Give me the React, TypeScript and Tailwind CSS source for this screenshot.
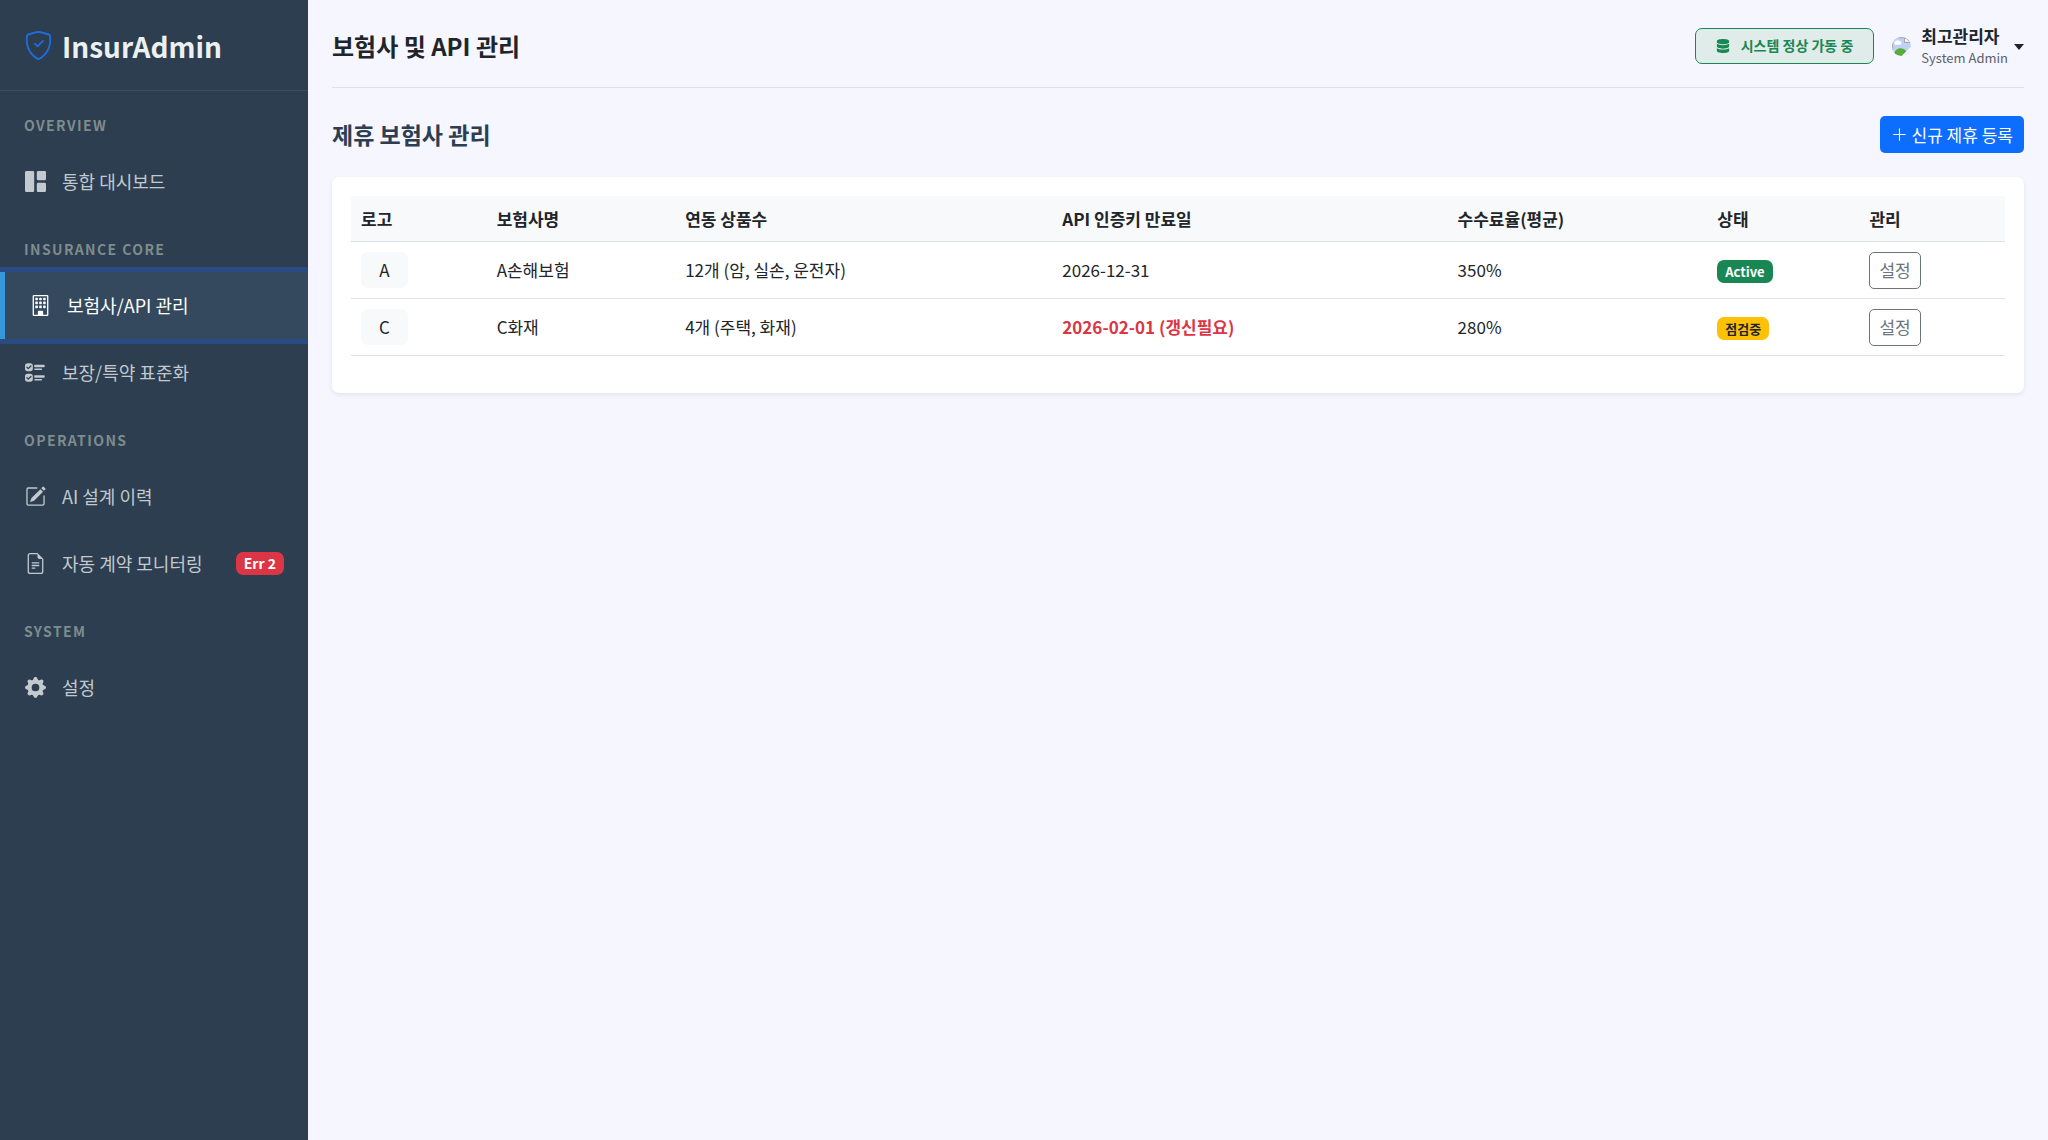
import type { ReactNode } from "react";
import {
  BsShieldCheck,
  BsGrid1X2Fill,
  BsBuilding,
  BsUiChecks,
  BsPencilSquare,
  BsFileEarmarkText,
  BsGearFill,
  BsPlusLg,
} from "react-icons/bs";
import { FaDatabase } from "react-icons/fa";

type Item = { label: string; icon: ReactNode; active?: boolean; badge?: string };
type Section = { title: string; items: Item[] };

const sections: Section[] = [
  { title: "OVERVIEW", items: [{ label: "통합 대시보드", icon: <BsGrid1X2Fill /> }] },
  {
    title: "INSURANCE CORE",
    items: [
      { label: "보험사/API 관리", icon: <BsBuilding />, active: true },
      { label: "보장/특약 표준화", icon: <BsUiChecks /> },
    ],
  },
  {
    title: "OPERATIONS",
    items: [
      { label: "AI 설계 이력", icon: <BsPencilSquare /> },
      { label: "자동 계약 모니터링", icon: <BsFileEarmarkText />, badge: "Err 2" },
    ],
  },
  { title: "SYSTEM", items: [{ label: "설정", icon: <BsGearFill /> }] },
];

const columns = [
  { label: "로고", width: "w-[8.2%]" },
  { label: "보험사명", width: "w-[11.4%]" },
  { label: "연동 상품수", width: "w-[22.8%]" },
  { label: "API 인증키 만료일", width: "w-[23.9%]" },
  { label: "수수료율(평균)", width: "w-[15.7%]" },
  { label: "상태", width: "w-[9.2%]" },
  { label: "관리", width: "w-[8.8%]" },
];

const insurers = [
  { logo: "A", name: "A손해보험", products: "12개 (암, 실손, 운전자)", expiry: "2026-12-31", expiring: false, rate: "350%", status: "Active", ok: true },
  { logo: "C", name: "C화재", products: "4개 (주택, 화재)", expiry: "2026-02-01 (갱신필요)", expiring: true, rate: "280%", status: "점검중", ok: false },
];

function NavItem({ item }: { item: Item }) {
  return (
    <a
      href="#"
      aria-current={item.active ? "page" : undefined}
      className={
        item.active
          ? "relative flex h-[67px] items-center gap-4 border-l-[5px] border-[#3498db] bg-[#34495e] px-6 text-white shadow-[0_0_0_5px_rgba(36,88,178,0.5)]"
          : "flex h-[67px] items-center gap-4 px-6 text-[#c2c9cf]"
      }
    >
      <span className="flex w-[22px] justify-center text-[21px]">{item.icon}</span>
      <span className="text-[18px]">{item.label}</span>
      {item.badge && (
        <span className="ml-auto rounded-[7px] bg-[#dc3545] px-2 text-[14px] leading-[23px] font-bold text-white">{item.badge}</span>
      )}
    </a>
  );
}

function Sidebar() {
  return (
    <aside className="w-[308px] shrink-0 overflow-hidden bg-[#2c3e50]">
      <div className="flex h-[91px] items-center gap-[9px] border-b border-[#3b4c5d] px-6 pt-px">
        <BsShieldCheck className="size-[29px] text-[#1f6ddc]" />
        <span className="text-[28px] leading-10 font-bold text-[#ecf0f1]">InsurAdmin</span>
      </div>
      <nav>
        {sections.map((s) => (
          <div key={s.title}>
            <h2 className="px-6 pt-[23px] pb-3 text-[14px] leading-[22px] font-bold tracking-widest text-[#7f8c8d]">{s.title}</h2>
            {s.items.map((i) => (
              <NavItem key={i.label} item={i} />
            ))}
          </div>
        ))}
      </nav>
    </aside>
  );
}

function Avatar() {
  return (
    <svg viewBox="0 0 16 16" className="size-[19px] rounded-full" role="img" aria-label="프로필">
      <path d="M0 0h10.500l5.500 5v3L8 16H0z" fill="#bfd2f3" />
      <path d="M2.800 6.500a1.600 1.600 0 0 1 .2-3 2 2 0 0 1 3.200 0 1.500 1.500 0 0 1 .5 3z" fill="#fff" />
      <path d="M1.500 15c.8-3.600 2.800-5.500 5.500-5.500 2.200 0 4 .8 5 2.500L8 16H1.500z" fill="#5aac38" />
      <path d="M15.500 11.500V16H11z" fill="#c9cdd6" />
      <path d="M10.500 0v4.500H16z" fill="#fff" stroke="#a4a9b5" strokeWidth="0.9" />
      <path d="M10.500 0.500H5A5 5 0 0 0 0.500 5v6" stroke="#a4a9b5" strokeWidth="0.9" fill="none" />
    </svg>
  );
}

export default function App() {
  return (
    <div className="flex min-h-screen bg-[#f5f6ff] font-['Noto_Sans_CJK_KR',sans-serif] text-[#212529]">
      <Sidebar />
      <main className="min-w-0 flex-1 px-6">
        <header className="flex h-[88px] items-center gap-[18px] border-b border-[#dee2e6] pt-1">
          <h1 className="mr-auto text-[24px] font-bold">보험사 및 API 관리</h1>
          <span className="flex h-9 items-center gap-[11px] rounded-[7px] border border-[#198754] bg-[#e0ece9] px-5 text-[14px] font-bold text-[#198754]">
            <FaDatabase />
            시스템 정상 가동 중
          </span>
          <button type="button" className="flex items-center pt-0.5 text-left">
            <Avatar />
            <span className="ml-[10px] flex flex-col">
              <span className="text-[17px] leading-[22px] font-bold">최고관리자</span>
              <span className="text-[13px] leading-[22px] text-[#5c6167]">System Admin</span>
            </span>
            <svg viewBox="0 0 10 6" className="ml-[6px] h-[6px] w-[10px]" aria-hidden="true">
              <path d="M0 0h10L5 6z" fill="currentColor" />
            </svg>
          </button>
        </header>
        <div className="flex items-center justify-between pt-7 pb-6">
          <h2 className="text-[23px] leading-[33px] font-bold text-[#2c3e50]">제휴 보험사 관리</h2>
          <button type="button" className="flex h-[37px] items-center gap-1 rounded-[5px] bg-[#0d6efd] px-[11px] text-[17px] text-white">
            <BsPlusLg className="size-[17px]" />
            신규 제휴 등록
          </button>
        </div>
        <section className="rounded-[7px] bg-white px-[19px] pt-[19px] pb-[37px] shadow-[0_2px_5px_rgba(0,0,0,0.08)]">
          <table className="w-full table-fixed border-collapse text-left text-[17px] leading-[26px]">
            <thead className="bg-[#f8f9fa]">
              <tr className="border-b border-[#dee2e6]">
                {columns.map((c) => (
                  <th key={c.label} scope="col" className={`px-[10px] pt-[10px] pb-[9px] font-bold ${c.width}`}>{c.label}</th>
                ))}
              </tr>
            </thead>
            <tbody>
              {insurers.map((r) => (
                <tr key={r.logo} className="border-b border-[#dee2e6]">
                  <td className="px-[10px] py-[10px]">
                    <span className="flex h-9 w-[47px] items-center justify-center rounded-[7px] bg-[#f8f9fa]">{r.logo}</span>
                  </td>
                  <td className="px-[10px]">{r.name}</td>
                  <td className="px-[10px]">{r.products}</td>
                  <td className={r.expiring ? "px-[10px] font-bold text-[#dc3545]" : "px-[10px]"}>{r.expiry}</td>
                  <td className="px-[10px]">{r.rate}</td>
                  <td className="px-[10px]">
                    <span
                      className={
                        r.ok
                          ? "inline-block rounded-[7px] bg-[#198754] px-2 align-middle text-[13px] leading-[23px] font-bold text-white"
                          : "inline-block rounded-[7px] bg-[#ffc107] px-2 align-middle text-[13px] leading-[23px] font-bold"
                      }
                    >
                      {r.status}
                    </span>
                  </td>
                  <td className="px-[10px]">
                    <button type="button" className="block h-[37px] rounded-[5px] border border-[#6c757d] px-[9px] text-[17px] text-[#6c757d]">설정</button>
                  </td>
                </tr>
              ))}
            </tbody>
          </table>
        </section>
      </main>
    </div>
  );
}
